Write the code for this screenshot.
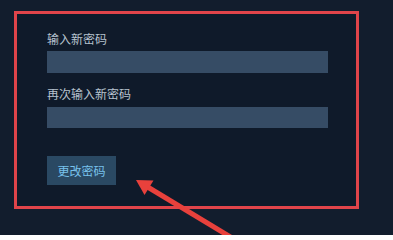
export default function App() {
  return (
    <div className="relative w-[393px] h-[235px] overflow-hidden bg-[#121d2d] pt-[11px] pl-[14px] font-['Noto_Sans_CJK_SC','Noto_Sans',sans-serif]">
      <div className="w-[345px] h-[198px] border-[3px] border-[#e0444a] bg-[#0f1a2a] pl-[30px] pt-[17px]">
        <div className="text-[12px] leading-[16px] text-[#b7c3cf]">输入新密码</div>
        <div className="mt-[4px] h-[22px] w-[281px] bg-[#364c65]" />
        <div className="mt-[13px] text-[12px] leading-[16px] text-[#b7c3cf]">再次输入新密码</div>
        <div className="mt-[5px] h-[21px] w-[281px] bg-[#364c65]" />
        <button className="mt-[28px] h-[29px] w-[69px] bg-[#2a4963] text-[12px] leading-[16px] text-[#78c2ec]">
          更改密码
        </button>
      </div>
      <svg className="absolute left-0 top-0" width="393" height="235" viewBox="0 0 393 235">
        <line x1="146" y1="186" x2="252" y2="250" stroke="#e8413c" strokeWidth="5" />
        <polygon points="136,180 153.5,180.5 144.5,195" fill="#e8413c" />
      </svg>
    </div>
  );
}
